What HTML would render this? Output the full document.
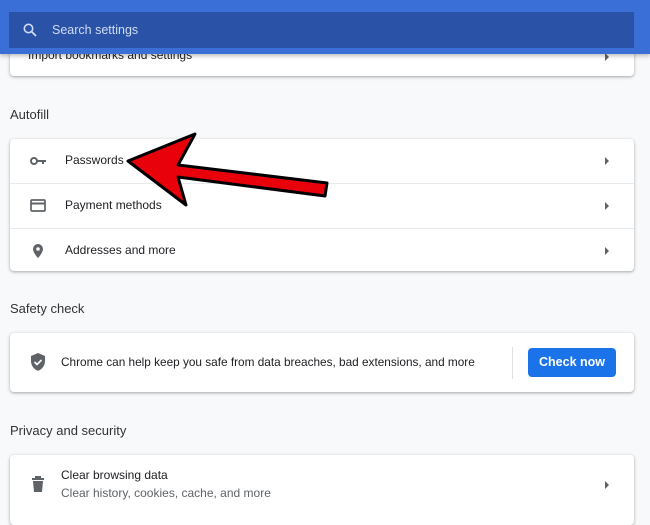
<!DOCTYPE html>
<html><head><style>
body{margin:0;width:650px;height:515px;overflow:hidden;background:#f8f9fa;font-family:"Liberation Sans",sans-serif;color:#202124;position:relative}
.hdr{position:absolute;left:0;top:0;width:650px;height:54px;background:#3a6fd8;box-shadow:0 2px 4px rgba(0,0,0,.25);z-index:5}
.search{position:absolute;left:9px;top:12px;width:625px;height:36px;background:#2a52a7;color:#cfdcf5;font-size:12.5px}
.search span{position:absolute;left:43px;top:11px}
.card{position:absolute;left:10px;width:624px;background:#fff;border-radius:4px;box-shadow:0 1px 2px rgba(60,64,67,.3),0 1px 3px 1px rgba(60,64,67,.12)}
.lbl{position:absolute;left:10px;font-size:13px;color:#333}
.row{position:relative;height:44px;border-top:1px solid #e8eaed;font-size:12px}
.row:first-child{border-top:none}
.row .t{position:absolute;left:55px;top:14px}
.row svg.i{position:absolute;left:19px;top:13px}
.tri{position:absolute;right:25px;top:18px;width:0;height:0;border-left:4px solid #5f6368;border-top:4px solid transparent;border-bottom:4px solid transparent}
</style></head><body>
<div class="hdr"><div class="search">
<svg style="position:absolute;left:14px;top:11px" width="14" height="14" viewBox="0 0 14 14"><circle cx="5.5" cy="5.5" r="4.2" fill="none" stroke="#cfdcf5" stroke-width="1.6"/><path d="M8.6 8.6L13 13" stroke="#cfdcf5" stroke-width="1.8"/></svg>
<span>Search settings</span></div></div>

<div class="card" style="top:20px;height:56px"><div style="position:absolute;left:18px;top:28px;font-size:12px">Import bookmarks and settings</div><div class="tri" style="top:33px"></div></div>

<div class="lbl" style="top:107px">Autofill</div>
<div class="card" style="top:139px;height:132px">
<div class="row"><svg class="i" width="18" height="18" viewBox="0 0 18 18"><circle cx="5" cy="9" r="3" fill="none" stroke="#5f6368" stroke-width="2"/><path d="M8 8h9v2h-2v2h-2v-2H8z" fill="#5f6368"/></svg><span class="t">Passwords</span><div class="tri"></div></div>
<div class="row"><svg class="i" width="18" height="18" viewBox="0 0 18 18"><rect x="2" y="3" width="14" height="11" rx="1" fill="none" stroke="#5f6368" stroke-width="1.7"/><rect x="2" y="5.5" width="14" height="2" fill="#5f6368"/></svg><span class="t">Payment methods</span><div class="tri"></div></div>
<div class="row"><svg class="i" width="18" height="18" viewBox="0 0 18 18"><path d="M9 2a5 5 0 0 0-5 5c0 3.8 5 9 5 9s5-5.2 5-9a5 5 0 0 0-5-5zm0 6.8a1.8 1.8 0 1 1 0-3.6 1.8 1.8 0 0 1 0 3.6z" fill="#5f6368"/></svg><span class="t">Addresses and more</span><div class="tri"></div></div>
</div>

<div class="lbl" style="top:301px">Safety check</div>
<div class="card" style="top:333px;height:59px">
<svg style="position:absolute;left:20px;top:20px" width="16" height="18" viewBox="0 0 16 18"><path d="M8 0L1 3v5c0 4.5 3 8.5 7 9.8 4-1.3 7-5.3 7-9.8V3z" fill="#5f6368"/><path d="M4.5 9l2.5 2.5 4.5-4.5" fill="none" stroke="#fff" stroke-width="1.6"/></svg>
<div style="position:absolute;left:51px;top:22px;font-size:11.8px">Chrome can help keep you safe from data breaches, bad extensions, and more</div>
<div style="position:absolute;left:502px;top:14px;width:1px;height:32px;background:#e0e0e0"></div>
<div style="position:absolute;left:518px;top:15px;width:88px;height:29px;background:#1a73e8;border-radius:4px;color:#fff;font-size:12.5px;font-weight:bold;text-align:center;line-height:29px">Check now</div>
</div>

<div class="lbl" style="top:423px">Privacy and security</div>
<div class="card" style="top:455px;height:70px">
<svg style="position:absolute;left:21px;top:20px" width="14" height="18" viewBox="0 0 14 18"><path d="M1 3h12v2H1zM4 1h6v2H4zM2 6h10l-1 11H3z" fill="#5f6368"/></svg>
<div style="position:absolute;left:51px;top:13px;font-size:12px">Clear browsing data</div>
<div style="position:absolute;left:51px;top:31px;font-size:12px;color:#5f6368">Clear history, cookies, cache, and more</div>
<div class="tri" style="top:26px"></div>
</div>

<svg style="position:absolute;left:0;top:0;z-index:3" width="650" height="515" viewBox="0 0 650 515">
<path d="M128 161 L195 134 L178 165 L327 183 L325 196 L178 177 L186 205 Z" fill="#e8000b" stroke="#000" stroke-width="3" stroke-linejoin="round"/>
</svg>
</body></html>
